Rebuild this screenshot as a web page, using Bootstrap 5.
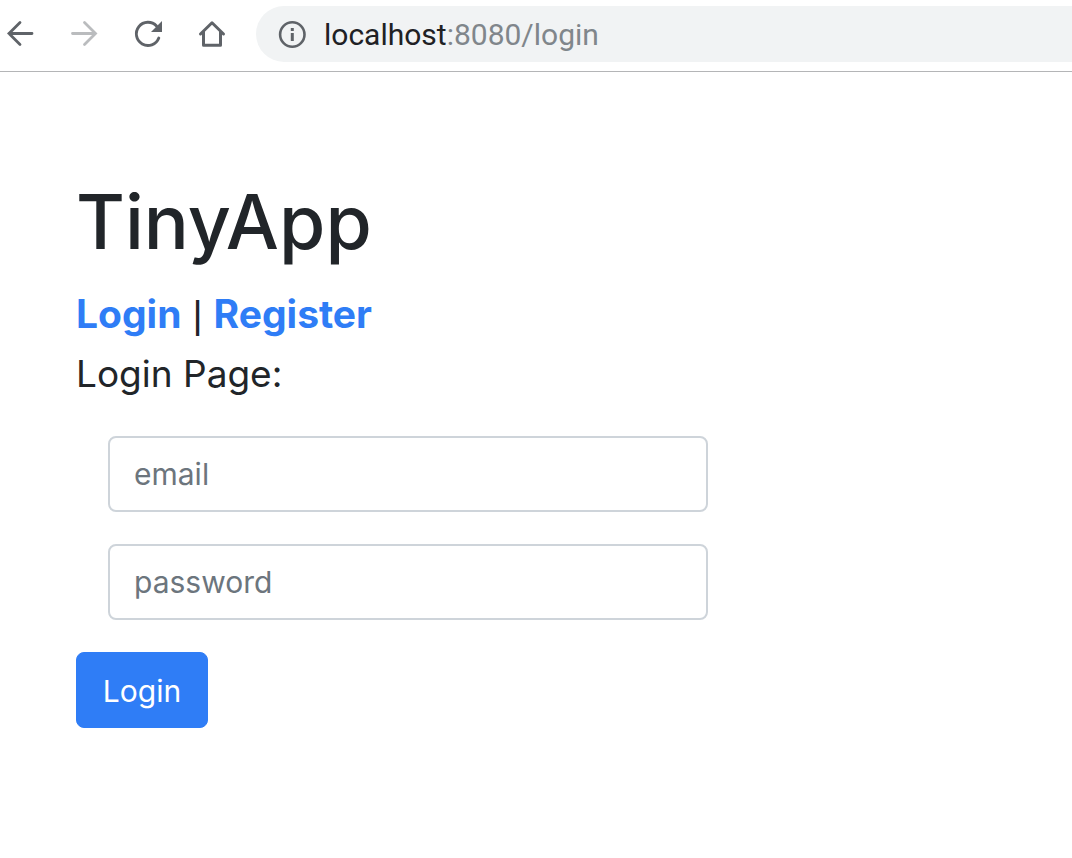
<!DOCTYPE html>
<html lang="en">
<head>
<meta charset="utf-8">
<meta name="viewport" content="width=device-width, initial-scale=1">
<title>TinyApp</title>
<link href="https://cdn.jsdelivr.net/npm/bootstrap@5.3.0/dist/css/bootstrap.min.css" rel="stylesheet">
<style>
  body { font-family: Inter, "Liberation Sans", sans-serif; color: #212529; background: #fff; }
  .toolbar { height: 72px; border-bottom: 1px solid #b4b5b7; padding: 0 0 3px 4px; }
  .tool-btn { width: 32px; height: 32px; padding: 0; border: 0; background: none; color: #5f6368; line-height: 0; }
  .tool-btn:disabled { color: #babcbe; }
  .tools { gap: 32px; margin-right: 28px; }
  .omnibox { height: 56px; background: #f1f3f4; border-radius: 28px 0 0 28px; padding-left: 22px; gap: 18px; font-family: Roboto, sans-serif; font-size: 30px; color: #80868b; }
  .omnibox .host { color: #202124; }
  .page-body { padding: 100px 76px 48px; }
  .page-title { font-size: 75px; line-height: 100px; font-weight: 500; margin-bottom: 12px; }
  .links { font-size: 39px; line-height: 60px; }
  .links a { color: #2f7df6; font-weight: 700; text-decoration: none; }
  .divider { font-family: "Liberation Sans", sans-serif; line-height: 1; }
  .intro { font-size: 37px; line-height: 60px; margin-bottom: 32px; }
  .fields { padding: 0 32px; gap: 32px; max-width: 664px; margin-bottom: 32px; }
  .fields .form-control { height: 76px; border: 2px solid #ced4da; border-radius: 8px; padding: 0 24px; font-size: 30px; }
  .fields .form-control::placeholder { color: #6c757d; }
  .btn-login { --bs-btn-bg: #2f7df6; --bs-btn-border-color: #2f7df6; min-width: 132px; height: 76px; border-radius: 8px; font-size: 30px; padding: 2px 24px 0; }
</style>
</head>
<body>
<header class="toolbar d-flex align-items-center">
  <nav class="tools d-flex" aria-label="Browser">
    <button class="tool-btn" type="button" aria-label="Back"><svg width="32" height="32" viewBox="0 0 32 32" fill="none" stroke="currentColor" stroke-width="2.800" stroke-linecap="round"><path d="M28 15.500H5M16 4.500 5 15.500l11 11"/></svg></button>
    <button class="tool-btn" type="button" aria-label="Forward" disabled><svg width="32" height="32" viewBox="0 0 32 32" fill="none" stroke="currentColor" stroke-width="2.800" stroke-linecap="round"><path d="M4.500 15.500H27M16.500 4.500l11 11-11 11"/></svg></button>
    <button class="tool-btn" type="button" aria-label="Reload"><svg width="32" height="32" viewBox="0 0 32 32" fill="none" stroke="currentColor" stroke-width="2.900" stroke-linecap="round"><path d="M26.800 20A11.600 11.600 0 1 1 24.500 8"/><path d="M30 3v11H19z" fill="currentColor" stroke="none"/></svg></button>
    <button class="tool-btn" type="button" aria-label="Home"><svg width="32" height="32" viewBox="0 0 32 32" fill="none" stroke="currentColor" stroke-width="3" stroke-linecap="round" stroke-linejoin="round"><path d="M4.500 16 16 4.800 27.500 16M7.500 14v13.300h17V14" /></svg></button>
  </nav>
  <div class="omnibox flex-grow-1 d-flex align-items-center">
    <svg width="28" height="28" viewBox="0 0 28 28" fill="none" stroke="#5f6368" stroke-width="3"><circle cx="14.300" cy="14.500" r="12.200" stroke-width="2.600"/><path d="M14.300 13v8M14.300 8v3"/></svg>
    <div><span class="host">localhost</span>:8080/login</div>
  </div>
</header>
<main class="page-body">
  <h1 class="page-title">TinyApp</h1>
  <nav class="links"><a href="#login">Login</a> <span class="divider">|</span> <a href="#register">Register</a></nav>
  <div class="intro">Login Page:</div>
  <form>
    <div class="fields d-flex flex-column">
      <input class="form-control" type="email" placeholder="email" aria-label="email">
      <input class="form-control" type="password" placeholder="password" aria-label="password">
    </div>
    <button class="btn btn-primary btn-login" type="submit">Login</button>
  </form>
</main>
<script src="https://cdn.jsdelivr.net/npm/bootstrap@5.3.0/dist/js/bootstrap.bundle.min.js"></script>
</body>
</html>
